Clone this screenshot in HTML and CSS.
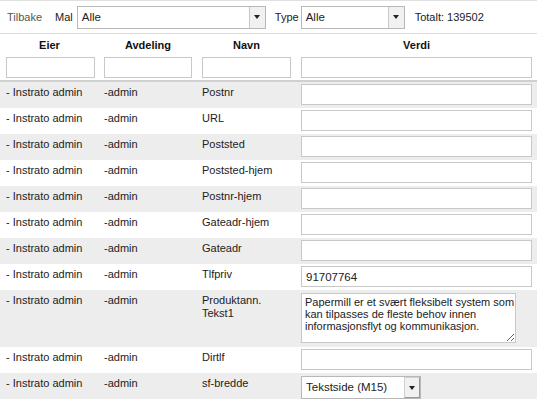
FILE: index.html
```html
<!DOCTYPE html>
<html lang="no">

<head>
    <meta charset="UTF-8">
    <title>Felter</title>
    <link rel="stylesheet" href="styles.css">
</head>

<body>
    <div class="toolbar">
        <a class="back" href="#">Tilbake</a>
        <span class="lbl lbl-mal">Mal</span>
        <div class="select select-mal"><span class="val">Alle</span><span class="arrow"></span></div>
        <span class="lbl lbl-type">Type</span>
        <div class="select select-type"><span class="val">Alle</span><span class="arrow"></span></div>
        <span class="total">Totalt: 139502</span>
    </div>

    <table class="grid">
        <colgroup>
            <col class="c-eier">
            <col class="c-avd">
            <col class="c-navn">
            <col>
        </colgroup>
        <thead>
            <tr class="heads">
                <th>Eier</th>
                <th>Avdeling</th>
                <th>Navn</th>
                <th>Verdi</th>
            </tr>
            <tr class="filters">
                <td><input type="text"></td>
                <td><input type="text"></td>
                <td><input type="text"></td>
                <td><input type="text"></td>
            </tr>
        </thead>
        <tbody>
            <tr>
                <td>- Instrato admin</td>
                <td>-admin</td>
                <td>Postnr</td>
                <td><input type="text"></td>
            </tr>
            <tr>
                <td>- Instrato admin</td>
                <td>-admin</td>
                <td>URL</td>
                <td><input type="text"></td>
            </tr>
            <tr>
                <td>- Instrato admin</td>
                <td>-admin</td>
                <td>Poststed</td>
                <td><input type="text"></td>
            </tr>
            <tr>
                <td>- Instrato admin</td>
                <td>-admin</td>
                <td>Poststed-hjem</td>
                <td><input type="text"></td>
            </tr>
            <tr>
                <td>- Instrato admin</td>
                <td>-admin</td>
                <td>Postnr-hjem</td>
                <td><input type="text"></td>
            </tr>
            <tr>
                <td>- Instrato admin</td>
                <td>-admin</td>
                <td>Gateadr-hjem</td>
                <td><input type="text"></td>
            </tr>
            <tr>
                <td>- Instrato admin</td>
                <td>-admin</td>
                <td>Gateadr</td>
                <td><input type="text"></td>
            </tr>
            <tr>
                <td>- Instrato admin</td>
                <td>-admin</td>
                <td>Tlfpriv</td>
                <td><input type="text" value="91707764"></td>
            </tr>
            <tr class="tall">
                <td>- Instrato admin</td>
                <td>-admin</td>
                <td>Produktann.<br>Tekst1</td>
                <td><textarea>Papermill er et svært fleksibelt system som kan tilpasses de fleste behov innen informasjonsflyt og kommunikasjon.</textarea></td>
            </tr>
            <tr>
                <td>- Instrato admin</td>
                <td>-admin</td>
                <td>Dirtlf</td>
                <td><input type="text"></td>
            </tr>
            <tr>
                <td>- Instrato admin</td>
                <td>-admin</td>
                <td>sf-bredde</td>
                <td>
                    <div class="select select-row"><span class="val">Tekstside (M15)</span><span class="arrow"></span></div>
                </td>
            </tr>
        </tbody>
    </table>
</body>

</html>
```

FILE: styles.css
```css
* {
    margin: 0;
    padding: 0;
    box-sizing: border-box;
}

body {
    font-family: "Liberation Sans", Arial, sans-serif;
    font-size: 11px;
    color: #222;
    background: #fff;
}

/* verktoylinje */
.toolbar {
    display: flex;
    align-items: center;
    height: 34px;
    padding: 0 7px;
    border-top: 1px solid #e0e0e0;
    border-bottom: 1px solid #dcdcdc;
}

.back {
    color: #555;
    text-decoration: none;
    margin-right: 13px;
}

.lbl-mal {
    margin-right: 4px;
}

.lbl-type {
    margin-right: 2px;
}

.select {
    display: flex;
    height: 23px;
    border: 1px solid #b8b8b8;
    background: #fff;
}

.select .val {
    flex: 1;
    padding-left: 4px;
    line-height: 21px;
    font-size: 11.5px;
}

.select .arrow {
    width: 16px;
    border-left: 1px solid #c8c8c8;
    background: #f1f1f1;
    display: flex;
    align-items: center;
    justify-content: center;
}

.select .arrow::after {
    content: "";
    border-left: 3px solid transparent;
    border-right: 3px solid transparent;
    border-top: 4px solid #222;
}

.select-mal {
    width: 189px;
    margin-right: 9px;
}

.select-type {
    width: 104px;
    margin-right: 10px;
}

.select-row {
    width: 120px;
    margin-top: 1px;
}

.select-row .arrow {
    border: 1px solid #d0d0d0;
    border-right-color: #9a9a9a;
    border-bottom-color: #9a9a9a;
}

/* tabell */
.grid {
    width: 537px;
    table-layout: fixed;
    border-collapse: collapse;
}

.c-eier {
    width: 99px;
}

.c-avd {
    width: 98px;
}

.c-navn {
    width: 99px;
}

.grid th {
    font-weight: bold;
    color: #111;
    text-align: center;
    padding: 5px 0 4px;
    line-height: 13px;
}

.grid td {
    padding: 2px 5px 3px 5px;
    vertical-align: top;
    line-height: 13px;
}

.grid td:first-child {
    padding-left: 6px;
    padding-right: 4px;
}

.filters td {
    padding-top: 1px;
    padding-bottom: 2px;
}

.filters {
    border-bottom: 2px solid #d0d0d0;
}

.grid tbody td {
    padding-top: 4px;
}

.grid tbody td:last-child {
    padding-top: 2px;
}

.grid tbody tr:nth-child(odd) {
    background: #ededed;
}

.grid input {
    display: block;
    width: 100%;
    height: 21px;
    border: 1px solid #c8c8c8;
    background: #fff;
    font-family: inherit;
    font-size: 11.5px;
    padding: 0 4px;
    color: #222;
    outline: none;
}

.grid textarea {
    display: block;
    width: 215px;
    height: 50px;
    margin-top: 1px;
    border: 1px solid #c8c8c8;
    font-family: inherit;
    font-size: 11px;
    line-height: 12px;
    padding: 2px 0 0 3px;
    overflow: hidden;
    color: #222;
}

.tall td:last-child {
    padding-bottom: 4px;
}
```
